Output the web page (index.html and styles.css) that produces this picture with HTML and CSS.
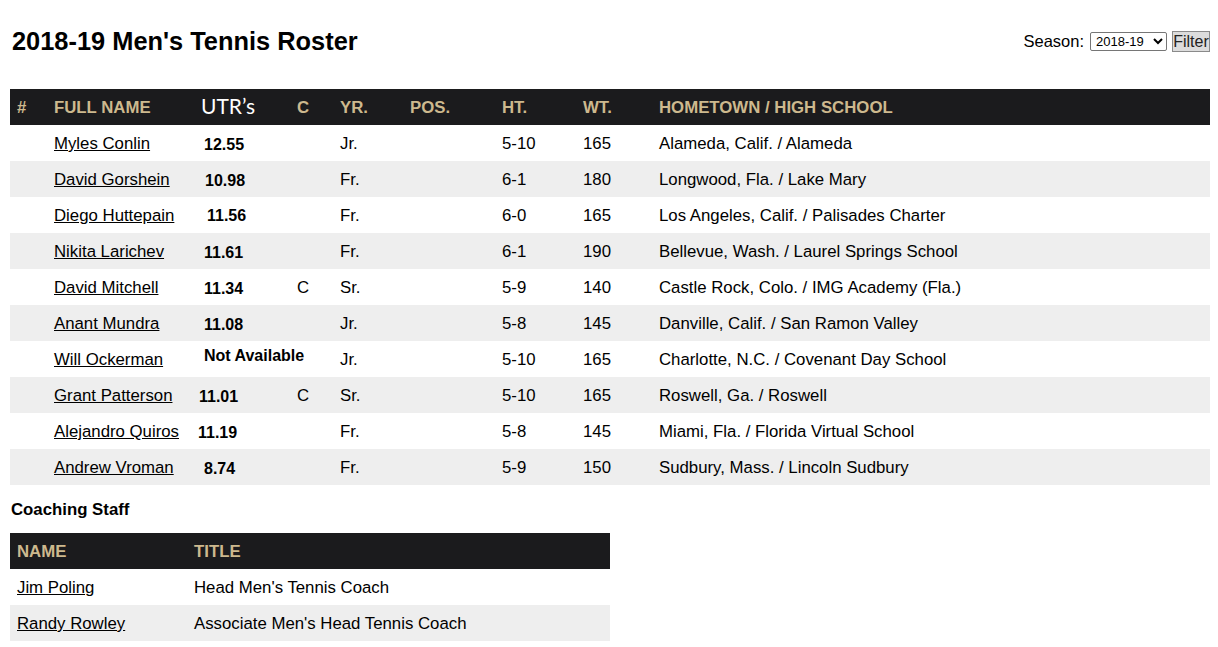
FILE: index.html
```html
<!DOCTYPE html>
<html>
<head>
<meta charset="utf-8">
<link rel="stylesheet" href="styles.css">
</head>
<body>
<div class="page">
  <div class="topbar">
    <h1 class="title">2018-19 Men's Tennis Roster</h1>
    <div class="season">
      <span class="season-label">Season:</span>
      <select class="season-select"><option>2018-19</option></select>
      <button class="filter-btn">Filter</button>
    </div>
  </div>

  <table class="roster">
    <colgroup>
      <col class="c-num"><col class="c-name"><col class="c-utr"><col class="c-c"><col class="c-yr"><col class="c-pos"><col class="c-ht"><col class="c-wt"><col class="c-home">
    </colgroup>
    <thead>
      <tr>
        <th>#</th><th>FULL NAME</th><th class="utr-head">UTR’s</th><th>C</th><th>YR.</th><th>POS.</th><th>HT.</th><th>WT.</th><th>HOMETOWN / HIGH SCHOOL</th>
      </tr>
    </thead>
    <tbody>
      <tr><td></td><td><a href="#">Myles Conlin</a></td><td class="utr"><span class="utr-v">12.55</span></td><td></td><td>Jr.</td><td></td><td>5-10</td><td>165</td><td>Alameda, Calif. / Alameda</td></tr>
      <tr><td></td><td><a href="#">David Gorshein</a></td><td class="utr"><span class="utr-v r1">10.98</span></td><td></td><td>Fr.</td><td></td><td>6-1</td><td>180</td><td>Longwood, Fla. / Lake Mary</td></tr>
      <tr><td></td><td><a href="#">Diego Huttepain</a></td><td class="utr"><span class="utr-v r3">11.56</span></td><td></td><td>Fr.</td><td></td><td>6-0</td><td>165</td><td>Los Angeles, Calif. / Palisades Charter</td></tr>
      <tr><td></td><td><a href="#">Nikita Larichev</a></td><td class="utr"><span class="utr-v">11.61</span></td><td></td><td>Fr.</td><td></td><td>6-1</td><td>190</td><td>Bellevue, Wash. / Laurel Springs School</td></tr>
      <tr><td></td><td><a href="#">David Mitchell</a></td><td class="utr"><span class="utr-v">11.34</span></td><td>C</td><td>Sr.</td><td></td><td>5-9</td><td>140</td><td>Castle Rock, Colo. / IMG Academy (Fla.)</td></tr>
      <tr><td></td><td><a href="#">Anant Mundra</a></td><td class="utr"><span class="utr-v">11.08</span></td><td></td><td>Jr.</td><td></td><td>5-8</td><td>145</td><td>Danville, Calif. / San Ramon Valley</td></tr>
      <tr><td></td><td><a href="#">Will Ockerman</a></td><td class="utr"><span class="utr-v na">Not Available</span></td><td></td><td>Jr.</td><td></td><td>5-10</td><td>165</td><td>Charlotte, N.C. / Covenant Day School</td></tr>
      <tr><td></td><td><a href="#">Grant Patterson</a></td><td class="utr"><span class="utr-v l5">11.01</span></td><td>C</td><td>Sr.</td><td></td><td>5-10</td><td>165</td><td>Roswell, Ga. / Roswell</td></tr>
      <tr><td></td><td><a href="#">Alejandro Quiros</a></td><td class="utr"><span class="utr-v l6">11.19</span></td><td></td><td>Fr.</td><td></td><td>5-8</td><td>145</td><td>Miami, Fla. / Florida Virtual School</td></tr>
      <tr><td></td><td><a href="#">Andrew Vroman</a></td><td class="utr"><span class="utr-v">8.74</span></td><td></td><td>Fr.</td><td></td><td>5-9</td><td>150</td><td>Sudbury, Mass. / Lincoln Sudbury</td></tr>
    </tbody>
  </table>

  <h2 class="staff-title">Coaching Staff</h2>
  <table class="staff">
    <colgroup><col class="s-name"><col class="s-title"></colgroup>
    <thead><tr><th>NAME</th><th>TITLE</th></tr></thead>
    <tbody>
      <tr><td><a href="#">Jim Poling</a></td><td>Head Men's Tennis Coach</td></tr>
      <tr><td><a href="#">Randy Rowley</a></td><td>Associate Men's Head Tennis Coach</td></tr>
    </tbody>
  </table>
</div>
</body>
</html>
```

FILE: styles.css
```css
html, body {
  margin: 0;
  padding: 0;
  background: #ffffff;
}
body {
  font-family: "Liberation Sans", Arial, sans-serif;
  color: #000;
}
.page {
  padding: 0 8px 0 10px;
}
.topbar {
  display: flex;
  justify-content: space-between;
  align-items: center;
  padding-top: 26px;
  height: 30px;
  margin-bottom: 33px;
}
.title {
  margin: 0;
  padding-left: 2px;
  font-size: 25.4px;
  font-weight: bold;
  line-height: 30px;
}
.season {
  display: flex;
  align-items: center;
  gap: 6px;
}
.season-label {
  font-size: 16.5px;
}
.season-select {
  font-family: "Liberation Sans", Arial, sans-serif;
  font-size: 13px;
  height: 19px;
  width: 77px;
  padding: 0 0 0 1px;
  border: 1px solid #767676;
  border-radius: 2px;
  background: #fff;
  color: #000;
}
.filter-btn {
  font-family: "Liberation Sans", Arial, sans-serif;
  font-size: 16px;
  height: 21px;
  width: 38px;
  padding: 0;
  margin-left: -1px;
  border: 1px solid #8a8a8a;
  background: #dcdcdc;
  color: #222;
  line-height: 19px;
}

table {
  border-collapse: collapse;
  table-layout: fixed;
}
tr { height: 36px; }
.roster { width: 1200px; }
.c-num { width: 37px; }
.c-name { width: 147px; }
.c-utr { width: 96px; }
.c-c { width: 43px; }
.c-yr { width: 70px; }
.c-pos { width: 92px; }
.c-ht { width: 81px; }
.c-wt { width: 76px; }
.c-home { width: 558px; }

th, td {
  box-sizing: border-box;
  height: 36px;
  line-height: 20px;
  padding: 2px 0 0 7px;
  text-align: left;
  white-space: nowrap;
  vertical-align: middle;
}
th {
  background: #1b1b1d;
  color: #cdb98e;
  font-weight: bold;
  font-size: 16.8px;
}
th.utr-head {
  color: #ffffff;
  font-family: Lato, "Open Sans", sans-serif;
  font-weight: normal;
  font-size: 21px;
  line-height: 20px;
  padding-top: 0;
  padding-bottom: 3px;
}
td {
  font-size: 16.8px;
}
tbody tr:nth-child(even) td { background: #eeeeee; }
td a {
  color: #000;
  text-decoration: underline;
}
td.utr { padding-left: 10px; }
.utr-v {
  display: inline-block;
  font-weight: bold;
  font-size: 16px;
  line-height: 20px;
  position: relative;
  top: 1px;
}
.utr-v.r1 { left: 1px; }
.utr-v.r3 { left: 3px; top: 0; }
.utr-v.l5 { left: -5px; }
.utr-v.l6 { left: -6px; }
.utr-v.na { top: -4px; }

.staff-title {
  margin: 0;
  padding: 16px 0 0 1px;
  font-size: 16.8px;
  font-weight: bold;
  line-height: 18px;
  height: 32px;
}
.staff { width: 600px; }
.s-name { width: 177px; }
.s-title { width: 423px; }
```
